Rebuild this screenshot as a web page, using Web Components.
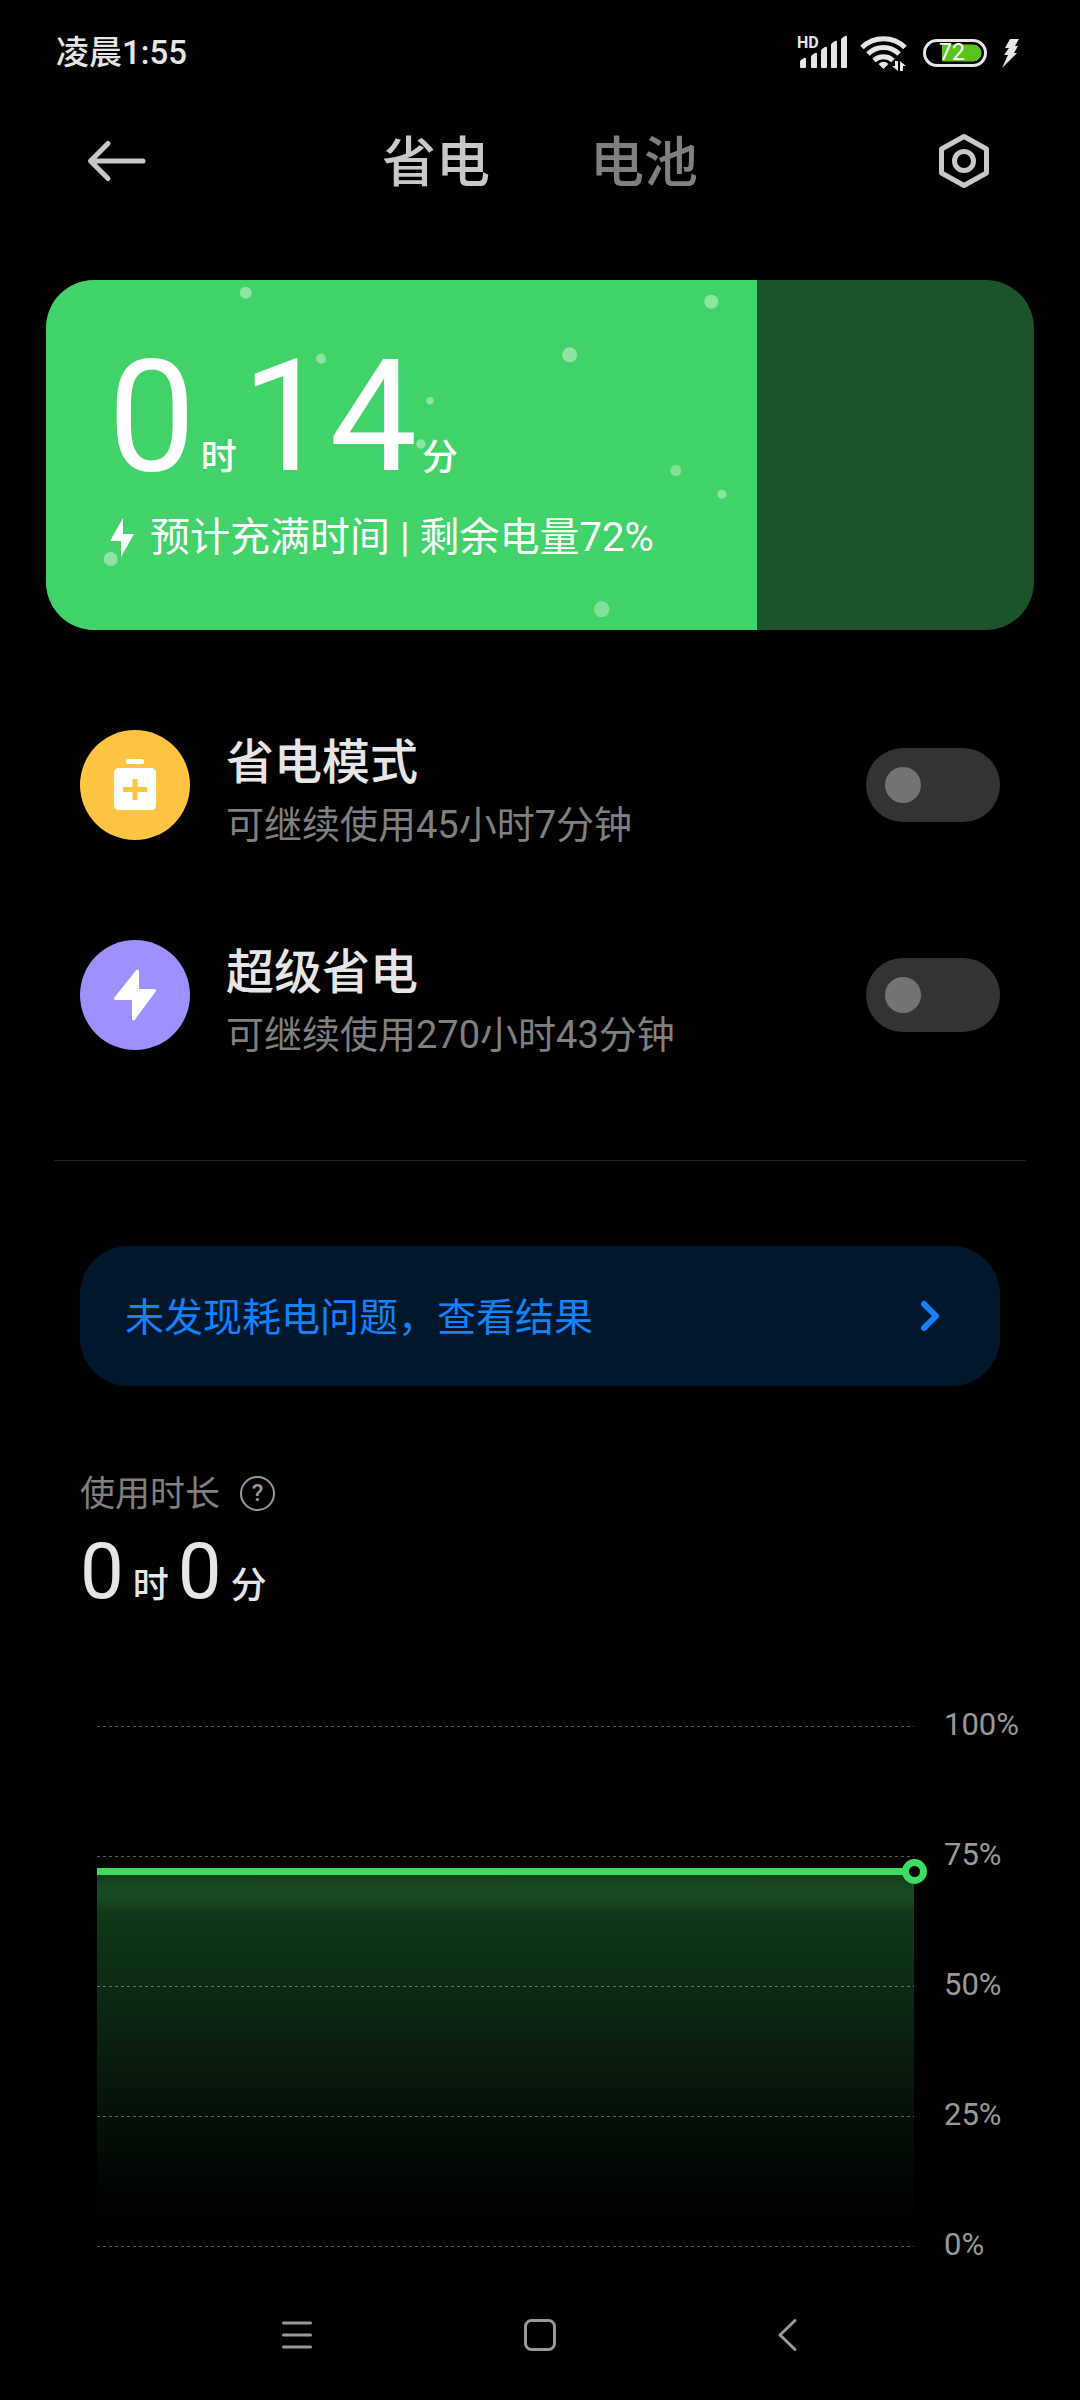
<!DOCTYPE html>
<html lang="zh-CN">
<head>
<meta charset="utf-8">
<meta name="viewport" content="width=device-width, initial-scale=1">
<title>省电与电池</title>
<style>
  html { background: #000; }
  body { margin: 0; color: #e6e6e6; font-family: Roboto, "Noto Sans CJK SC", sans-serif; }
</style>
</head>
<body>
<power-page></power-page>

<script>
const define = (name, html, setup) => {
  const template = document.createElement('template');
  template.innerHTML = html;
  customElements.define(name, class extends HTMLElement {
    constructor() {
      super();
      this.attachShadow({ mode: 'open' }).append(template.content.cloneNode(true));
    }
    connectedCallback() { if (setup) setup(this, this.shadowRoot); }
  });
};

define('status-bar', `
<style>
  :host { display: flex; align-items: center; justify-content: space-between; height: 40px; padding: 33px 60px 31px 56px; color: #e6e6e6; }
  time { font-size: 33px; line-height: 40px; font-weight: 500; }
  .icons { display: flex; align-items: center; }
  svg { display: block; fill: currentColor; }
  .signal { margin-right: 12px; }
  .wifi { margin-right: 16px; }
  .battery { display: grid; margin-right: 14px; }
  .battery > * { grid-area: 1 / 1; }
  .battery span { font-size: 23px; line-height: 28px; padding-left: 16px; color: #fff; }
  .signal { display: grid; }
  .signal > * { grid-area: 1 / 1; }
  .signal span { margin-top: -1px; font-size: 16px; line-height: 18px; font-weight: 700; }
</style>
<time>凌晨1:55</time>
<div class="icons">
  <div class="signal">
    <svg width="51" height="36" viewBox="0 0 51 36">
      <path d="M3 27q0-1 1-2l3-2q2-1 2 1v8q0 1-1 1H4q-1 0-1-1zM14 22q0-1 1-2l3-2q2-1 2 1v13q0 1-1 1h-4q-1 0-1-1zM24 16q0-1 1-2l3-2q2-1 2 1v19q0 1-1 1h-4q-1 0-1-1zM34 10q0-1 1-2l3-2q2-1 2 1v25q0 1-1 1h-4q-1 0-1-1zM44 5q0-1 1-2l3-2q2-1 2 1v30q0 1-1 1h-4q-1 0-1-1z"/>
    </svg>
    <span>HD</span>
  </div>
  <svg class="wifi" width="47" height="36" viewBox="0 0 47 36">
    <g fill="none" stroke="currentColor" stroke-width="5">
      <path d="M2 12.500A31 31 0 0 1 45 12.500"/>
      <path d="M8 19A22 22 0 0 1 39 19"/>
      <path d="M14 25.500A14 14 0 0 1 33 25.500"/>
    </g>
    <path d="M23.500 34l-5-5q5-4.500 10 0z"/>
    <path d="M35 26h3v10l-6-5h3zM40 36V26l6 5h-3v5z"/>
  </svg>
  <div class="battery">
    <svg width="64" height="28" viewBox="0 0 64 28">
      <rect x="1.500" y="1.500" width="61" height="25" rx="12.500" fill="none" stroke="currentColor" stroke-width="3"/>
      <path d="M19 5.500h31a8.500 8.500 0 0 1 0 17H19z" fill="#59c31a"/>
    </svg>
    <span>72</span>
  </div>
  <svg width="19" height="30" viewBox="0 0 19 30"><path d="M9 1h9l-4 7h3l-4 7h3L1 30l6-13H3l5-7H4z"/></svg>
</div>`);

define('page-header', `
<style>
  :host { display: grid; grid-template-columns: 1fr auto 1fr; align-items: center; height: 80px; padding: 17px 84px 79px; }
  button { display: flex; width: 64px; height: 64px; padding: 0; border: 0; background: none; color: #c8c8c8; align-items: center; }
  .settings { justify-self: end; justify-content: center; }
  nav { display: flex; gap: 100px; padding-top: 6px; }
  a { font-size: 54px; line-height: 74px; font-weight: 500; color: #808080; text-decoration: none; }
  a[aria-current] { color: #c8c8c8; }
  svg { display: block; fill: none; stroke: currentColor; stroke-width: 5; stroke-linecap: round; stroke-linejoin: round; }
</style>
<button aria-label="返回"><svg width="64" height="44" viewBox="0 0 64 44"><path d="M59 22H7M24 4.500L6.500 22 24 39.500"/></svg></button>
<nav><a href="#save" aria-current="page">省电</a><a href="#battery">电池</a></nav>
<button class="settings" aria-label="设置"><svg width="56" height="56" viewBox="0 0 56 56"><path d="M28 3.500L50.500 16v24L28 52.500 5.500 40V16z"/><circle cx="28" cy="28" r="9.500"/></svg></button>`);

define('duration-text', `
<style>
  :host { display: flex; align-items: baseline; gap: var(--gap, 9px); font-size: var(--digits, 78px); line-height: 1; }
  small { font-size: 36px; line-height: 1; font-weight: 500; }
</style>
<span class="h"></span><small>时</small><span class="m"></span><small>分</small>`,
(host, root) => {
  root.querySelector('.h').textContent = host.getAttribute('hours');
  root.querySelector('.m').textContent = host.getAttribute('minutes');
});

define('charge-card', `
<style>
  :host { display: grid; margin: 0 46px; border-radius: 48px; overflow: hidden; background: #1b542b; color: #fff; }
  .fill { grid-area: 1 / 1; width: 72%; overflow: hidden; background: #41d369; }
  .content { grid-area: 1 / 1; z-index: 1; padding: 59px 62px 68px; }
  duration-text { --digits: 156px; --gap: 5px; }
  p { display: flex; align-items: center; gap: 14px; margin: 19px 0 0; font-size: 40px; line-height: 48px; white-space: pre; }
  svg { display: block; }
  .fill svg { fill: #fff; }
</style>
<div class="fill">
  <svg width="711" height="350" viewBox="0 0 711 350">
    <g fill-opacity=".4">
      <circle cx="199.700" cy="12.700" r="6"/><circle cx="275" cy="78.700" r="5"/><circle cx="384" cy="120.700" r="3.700"/><circle cx="375" cy="164" r="4.700"/>
      <circle cx="64.700" cy="279" r="7"/><circle cx="665.300" cy="21.700" r="7"/><circle cx="523.700" cy="74.700" r="7.500"/><circle cx="676" cy="214.300" r="4.500"/>
    </g>
    <g fill-opacity=".33"><circle cx="629.700" cy="190.500" r="5.500"/><circle cx="555.700" cy="329.300" r="8"/></g>
  </svg>
</div>
<div class="content">
  <duration-text hours="0" minutes="14"></duration-text>
  <p><svg width="28" height="40" viewBox="0 0 28 40" fill="#fff"><path d="M15 0L2 23h11v16L26 16H15z"/></svg><span>预计充满时间 | 剩余电量72%</span></p>
</div>`);

define('power-option', `
<style>
  :host { display: block; }
  label { display: flex; align-items: center; height: 110px; }
  .icon { display: flex; width: 110px; height: 110px; border-radius: 50%; background: var(--tint); }
  .text { flex: 1; padding: 16px 0 0 36px; }
  .title { display: block; font-size: 48px; line-height: 64px; font-weight: 500; color: #e6e6e6; }
  .note { display: block; font-size: 38px; line-height: 60px; color: #808080; }
  input { appearance: none; display: flex; align-items: center; width: 134px; height: 74px; margin: 0; padding: 0 19px; box-sizing: border-box; border-radius: 37px; background: #333; }
  input::before { content: ""; width: 36px; height: 36px; border-radius: 50%; background: #747474; }
  input:checked { justify-content: flex-end; background: #0d84ff; }
  input:checked::before { background: #fff; }
</style>
<label>
  <span class="icon"><slot name="icon"></slot></span>
  <span class="text"><span class="title"><slot name="title"></slot></span><span class="note"><slot></slot></span></span>
  <input type="checkbox" role="switch">
</label>`);

define('check-link', `
<style>
  :host { display: block; }
  a { display: flex; align-items: center; justify-content: space-between; height: 140px; padding: 0 58px 0 45px; border-radius: 48px; background: #00172c; color: #1283ff; font-size: 39px; line-height: 48px; text-decoration: none; }
  span { padding-top: 4px; }
</style>
<a href="#result"><span><slot></slot></span><svg width="24" height="36" viewBox="0 0 24 36" fill="none" stroke="currentColor" stroke-width="6" stroke-linecap="round" stroke-linejoin="round"><path d="M6 6l12 12L6 30"/></svg></a>`);

define('usage-time', `
<style>
  :host { display: block; }
  .label { display: flex; align-items: center; gap: 20px; height: 42px; font-size: 35px; line-height: 42px; color: #808080; }
  .label span { padding-top: 4px; }
  button { width: 35px; height: 35px; padding: 0; border: 2px solid #999; border-radius: 50%; background: none; color: #999; font: 500 24px/30px Roboto, sans-serif; }
  duration-text { margin-top: 19px; }
</style>
<div class="label"><span>使用时长</span><button aria-label="说明">?</button></div>
<duration-text hours="0" minutes="0"></duration-text>`);

define('level-chart', `
<style>
  :host { display: flex; align-items: flex-start; gap: 30px; padding: 0 60px 0 97px; }
  .plot { position: relative; flex: 1; display: flex; flex-direction: column; justify-content: space-between; height: 521px; margin-top: 18px; }
  .line { position: relative; height: 1px; background: repeating-linear-gradient(90deg, rgba(255,255,255,.35) 0 3px, transparent 3px 6px); }
  .area { position: absolute; inset: 28% 0 0; background: linear-gradient(rgba(34,100,48,0) 4px, rgba(34,100,48,.4) 20px, rgba(34,100,48,.3) 30px, transparent 38px), linear-gradient(#12401c, #0f3817 12%, #0b2812 35%, #051108 65%, #010402 88%, #000); }
  .level { position: absolute; top: -4px; left: 0; right: 0; height: 7px; background: #3fdb63; }
  .dot { position: absolute; top: -13px; right: -13px; width: 11px; height: 11px; border: 7px solid #3fdb63; border-radius: 50%; background: #000; }
  .scale { display: flex; flex-direction: column; gap: 98px; width: 76px; padding-top: 1px; font-size: 31px; line-height: 32px; color: #999; }
</style>
<div class="plot">
  <div class="area"><div class="level"></div><div class="dot"></div></div>
  <div class="line"></div><div class="line"></div><div class="line"></div><div class="line"></div><div class="line"></div>
</div>
<div class="scale"><span>100%</span><span>75%</span><span>50%</span><span>25%</span><span>0%</span></div>`);

define('nav-bar', `
<style>
  :host { display: flex; justify-content: center; padding: 26px 0 16px; }
  button { display: flex; justify-content: center; align-items: center; width: 243px; height: 96px; padding: 0; border: 0; background: none; color: #999; }
  svg { fill: none; stroke: currentColor; stroke-width: 3; stroke-linecap: round; stroke-linejoin: round; }
</style>
<button aria-label="菜单"><svg width="40" height="40" viewBox="0 0 40 40"><path d="M6.500 8h27M6.500 20h27M6.500 32h27"/></svg></button>
<button aria-label="主页"><svg width="40" height="40" viewBox="0 0 40 40"><rect x="5.500" y="5.500" width="29" height="29" rx="6"/></svg></button>
<button aria-label="返回"><svg width="40" height="40" viewBox="0 0 40 40"><path d="M32 5.500L17 20l15 14.500"/></svg></button>`);

define('power-page', `
<style>
  :host { display: block; }
  .options { display: flex; flex-direction: column; gap: 100px; padding: 100px 80px 110px; }
  hr { height: 1px; margin: 0 54px; border: 0; background: #222; }
  check-link { margin: 85px 80px 86px; }
  usage-time { margin: 0 80px 97px; }
  svg { display: block; margin: auto; }
</style>
<status-bar></status-bar>
<page-header></page-header>
<main>
  <charge-card></charge-card>
  <section class="options">
    <power-option style="--tint:#ffc542">
      <svg slot="icon" width="60" height="60" viewBox="0 0 60 60" fill="#fff"><rect x="21" y="4" width="18" height="5" rx="2"/><path fill-rule="evenodd" d="M14 13h32q5 0 5 5v32q0 5-5 5H14q-5 0-5-5V18q0-5 5-5zM27.500 24v8H18v5h9.500v8h5v-8H42v-5h-9.500v-8z"/></svg>
      <span slot="title">省电模式</span>可继续使用45小时7分钟
    </power-option>
    <power-option style="--tint:#9c91ff">
      <svg slot="icon" width="60" height="60" viewBox="0 0 60 60"><path fill="#fff" stroke="#fff" stroke-width="3" stroke-linejoin="round" d="M32.500 6v19.500H49.500L28.500 54V33.500H10.500z"/></svg>
      <span slot="title">超级省电</span>可继续使用270小时43分钟
    </power-option>
  </section>
  <hr>
  <check-link>未发现耗电问题，查看结果</check-link>
  <usage-time></usage-time>
  <level-chart></level-chart>
</main>
<nav-bar></nav-bar>`);
</script>
</body>
</html>
